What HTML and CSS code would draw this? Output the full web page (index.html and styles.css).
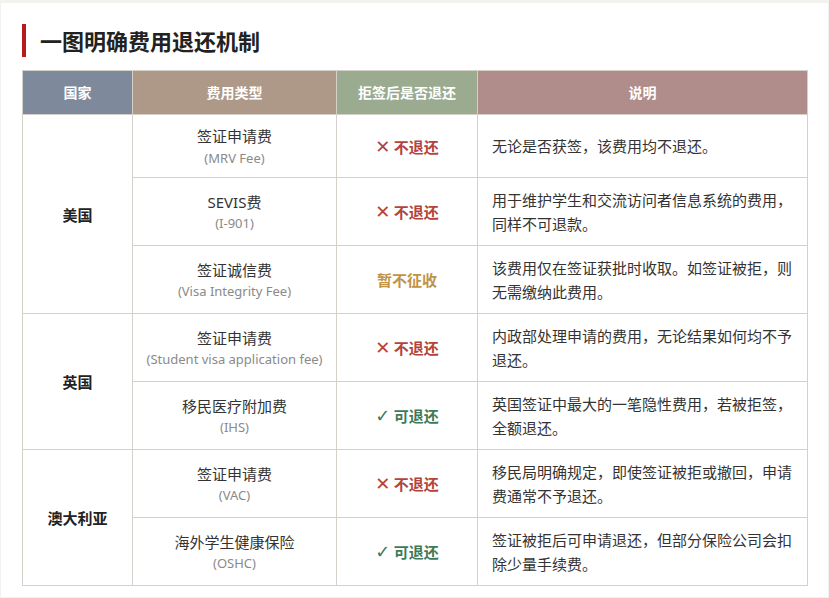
FILE: index.html
```html
<!DOCTYPE html>
<html lang="zh-CN">
<head>
<meta charset="utf-8">
<title>一图明确费用退还机制</title>
<link rel="stylesheet" href="styles.css">
</head>
<body>
<div class="card">
  <h2 class="title">一图明确费用退还机制</h2>
  <table class="fees">
    <colgroup>
      <col class="c-country">
      <col class="c-fee">
      <col class="c-status">
      <col class="c-note">
    </colgroup>
    <thead>
      <tr>
        <th class="h-country">国家</th>
        <th class="h-fee">费用类型</th>
        <th class="h-status">拒签后是否退还</th>
        <th class="h-note">说明</th>
      </tr>
    </thead>
    <tbody>
      <tr>
        <td class="country" rowspan="3">美国</td>
        <td class="fee"><div class="name">签证申请费</div><div class="sub">(MRV Fee)</div></td>
        <td class="status no"><span class="mark">✕</span> 不退还</td>
        <td class="note">无论是否获签，该费用均不退还。</td>
      </tr>
      <tr>
        <td class="fee"><div class="name">SEVIS费</div><div class="sub">(I-901)</div></td>
        <td class="status no"><span class="mark">✕</span> 不退还</td>
        <td class="note">用于维护学生和交流访问者信息系统的费用，同样不可退款。</td>
      </tr>
      <tr>
        <td class="fee"><div class="name">签证诚信费</div><div class="sub">(Visa Integrity Fee)</div></td>
        <td class="status wait">暂不征收</td>
        <td class="note">该费用仅在签证获批时收取。如签证被拒，则无需缴纳此费用。</td>
      </tr>
      <tr>
        <td class="country" rowspan="2">英国</td>
        <td class="fee"><div class="name">签证申请费</div><div class="sub">(Student visa application fee)</div></td>
        <td class="status no"><span class="mark">✕</span> 不退还</td>
        <td class="note">内政部处理申请的费用，无论结果如何均不予退还。</td>
      </tr>
      <tr>
        <td class="fee"><div class="name">移民医疗附加费</div><div class="sub">(IHS)</div></td>
        <td class="status yes"><span class="mark">✓</span> 可退还</td>
        <td class="note">英国签证中最大的一笔隐性费用，若被拒签，全额退还。</td>
      </tr>
      <tr>
        <td class="country" rowspan="2">澳大利亚</td>
        <td class="fee"><div class="name">签证申请费</div><div class="sub">(VAC)</div></td>
        <td class="status no"><span class="mark">✕</span> 不退还</td>
        <td class="note">移民局明确规定，即使签证被拒或撤回，申请费通常不予退还。</td>
      </tr>
      <tr>
        <td class="fee"><div class="name">海外学生健康保险</div><div class="sub">(OSHC)</div></td>
        <td class="status yes"><span class="mark">✓</span> 可退还</td>
        <td class="note">签证被拒后可申请退还，但部分保险公司会扣除少量手续费。</td>
      </tr>
    </tbody>
  </table>
</div>
</body>
</html>
```
FILE: styles.css
```css
html, body {
  margin: 0;
  padding: 0;
  background: #f3f2ee;
}
body {
  font-family: "Noto Sans", "Noto Sans CJK SC", sans-serif;
  color: #333;
  padding: 3px 1px 3px 1px;
}
.card {
  background: #ffffff;
  padding: 21px 21px 11px 21px;
}
.title {
  margin: 0 0 13px 0;
  height: 33px;
  border-left: 4px solid #b71c1c;
  padding-left: 14px;
  font-size: 22px;
  line-height: 33px;
  font-weight: 700;
  color: #222;
  font-family: "Noto Sans CJK SC", sans-serif;
}
.fees {
  width: 785px;
  border-collapse: collapse;
  table-layout: fixed;
}
.c-country { width: 110px; }
.c-fee { width: 204px; }
.c-status { width: 141px; }
.c-note { width: 330px; }
.fees th, .fees td {
  border: 1px solid #d6d0ca;
}
.fees th {
  color: #ffffff;
  font-family: "Noto Sans CJK SC", sans-serif;
  font-size: 14px;
  font-weight: 700;
  line-height: 20px;
  height: 20px;
  padding: 11px 8px 12px 8px;
  text-align: center;
}
.h-country { background: #7e8a9b; }
.h-fee { background: #ae9989; }
.h-status { background: #9bab8f; }
.h-note { background: #b08d8b; }
.fees td {
  font-size: 15px;
  padding: 10px 14px;
  vertical-align: middle;
}
.country {
  text-align: center;
  font-weight: 700;
  color: #222;
  font-family: "Noto Sans CJK SC", sans-serif;
}
.fees td.fee {
  text-align: center;
  padding-left: 4px;
  padding-right: 4px;
}
.fee .name {
  line-height: 23.5px;
  color: #333;
}
.fee .sub {
  font-size: 13px;
  line-height: 18.5px;
  color: #8a8a8a;
  white-space: nowrap;
}
.status {
  text-align: center;
  font-weight: 700;
  font-family: "Noto Sans CJK SC", sans-serif;
}
.status .mark {
  font-family: "DejaVu Sans", sans-serif;
  font-weight: 400;
  font-size: 18px;
  line-height: 0;
}
.status.no { color: #b5433d; }
.status.yes { color: #3d7a5c; }
.status.wait { color: #c29345; }
.note {
  line-height: 23.5px;
  color: #333;
  font-family: "Noto Sans CJK SC", sans-serif;
}
```
